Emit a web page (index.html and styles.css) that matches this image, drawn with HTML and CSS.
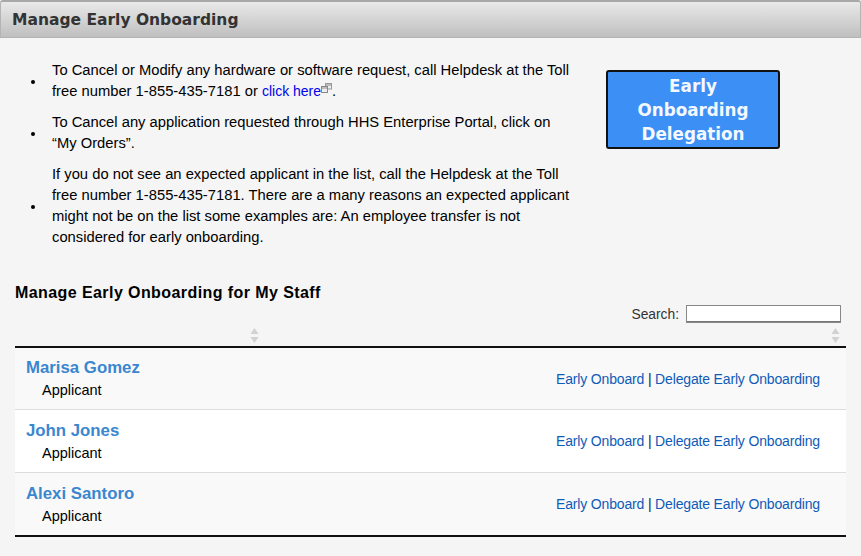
FILE: index.html
```html
<!DOCTYPE html>
<html lang="en">
<head>
<meta charset="utf-8">
<title>Manage Early Onboarding</title>
<link rel="stylesheet" href="styles.css">
</head>
<body>
<header class="titlebar"><h1>Manage Early Onboarding</h1></header>
<section class="intro">
  <ul class="notes">
    <li>To Cancel or Modify any hardware or software request, call Helpdesk at the Toll free number 1-855-435-7181 or <a class="plain" href="#">click here<svg class="ext" width="11" height="11" viewBox="0 0 11 11"><rect x="4.500" y="0.500" width="6" height="5.500" fill="#eee" stroke="#999"/><rect x="0.500" y="3.500" width="6" height="6" fill="#eee" stroke="#888"/><path d="M0.500 5h6M4.500 2h6" stroke="#888"/></svg></a>.</li>
    <li>To Cancel any application requested through HHS Enterprise Portal, click on “My Orders”.</li>
    <li>If you do not see an expected applicant in the list, call the Helpdesk at the Toll free number 1-855-435-7181. There are a many reasons an expected applicant might not be on the list some examples are: An employee transfer is not considered for early onboarding.</li>
  </ul>
  <a class="delegate" href="#">Early Onboarding Delegation</a>
</section>
<section class="staff">
  <h2>Manage Early Onboarding for My Staff</h2>
  <div class="search"><label for="q">Search:</label><input id="q" type="text"></div>
  <div class="sorts">
    <span class="sort-cell first"><svg class="sort" width="9" height="15" viewBox="0 0 10 16" preserveAspectRatio="none"><path d="M5 0l4.500 6.500h-9z M5 16l4.500-6.500h-9z" fill="#d2d2d2"/></svg></span>
    <span class="sort-cell"><svg class="sort" width="9" height="15" viewBox="0 0 10 16" preserveAspectRatio="none"><path d="M5 0l4.500 6.500h-9z M5 16l4.500-6.500h-9z" fill="#d2d2d2"/></svg></span>
  </div>
  <div class="rows">
    <div class="row odd">
      <div class="who"><a class="name" href="#">Marisa Gomez</a><span class="role">Applicant</span></div>
      <div class="actions"><a href="#">Early Onboard</a> | <a href="#">Delegate Early Onboarding</a></div>
    </div>
    <div class="row">
      <div class="who"><a class="name" href="#">John Jones</a><span class="role">Applicant</span></div>
      <div class="actions"><a href="#">Early Onboard</a> | <a href="#">Delegate Early Onboarding</a></div>
    </div>
    <div class="row odd">
      <div class="who"><a class="name" href="#">Alexi Santoro</a><span class="role">Applicant</span></div>
      <div class="actions"><a href="#">Early Onboard</a> | <a href="#">Delegate Early Onboarding</a></div>
    </div>
  </div>
</section>
</body>
</html>
```
FILE: styles.css
```css
* { box-sizing: border-box; }
html, body { height: 100%; }
body {
  margin: 0;
  background: #f5f5f5;
  font-family: "Liberation Sans", Arial, sans-serif;
  font-size: 14.500px;
  color: #000;
  overflow: hidden;
}
a { text-decoration: none; }
.titlebar {
  height: 38px;
  background: linear-gradient(#e9e9e9, #bfbfbf);
  border: 1px solid #b4b4b4;
  border-top: 2px solid #a8a8a8;
  border-radius: 3px 3px 0 0;
  display: flex;
  align-items: center;
  padding-left: 11px;
}
h1 {
  margin: 0;
  font-family: "DejaVu Sans", Verdana, sans-serif;
  font-size: 15.500px;
  font-weight: bold;
  color: #333;
}
.intro {
  display: flex;
  align-items: flex-start;
  padding: 22px 81px 0 0;
  height: 245px;
}
.notes {
  list-style: none;
  margin: 0;
  padding: 0 0 0 30px;
  width: 575px;
  flex: none;
  font-size: 14.750px;
  line-height: 21px;
  display: flex;
  flex-direction: column;
  gap: 10px;
}
.notes li {
  position: relative;
  padding-left: 22px;
  width: 100%;
}
.notes li::before {
  content: "";
  position: absolute;
  left: 1px;
  top: 50%;
  width: 4px;
  height: 4px;
  margin-top: -1px;
  border-radius: 50%;
  background: #000;
}
.plain { color: #0000ee; font-size: 14px; }
.ext { margin-left: 0; vertical-align: 2px; }
.delegate {
  margin: 10px 0 0 auto;
  width: 174px;
  height: 79px;
  padding: 2px 24px 0;
  background: #3b8ff5;
  border: 2px solid #111;
  border-radius: 3px;
  color: #f4f8ff;
  font-family: "DejaVu Sans", Verdana, sans-serif;
  font-weight: bold;
  font-size: 16.800px;
  line-height: 24px;
  text-align: center;
}
.staff { padding: 0 15px; }
h2 {
  margin: 0;
  font-size: 16px;
  line-height: 20px;
  font-weight: bold;
  letter-spacing: 0.420px;
}
.search {
  display: flex;
  justify-content: flex-end;
  align-items: center;
  gap: 7px;
  height: 18px;
  margin: 2px 5px 0 0;
  font-size: 13.800px;
  color: #333;
}
.search input {
  width: 155px;
  height: 18px;
  padding: 0;
  background: #fff;
  border: 1px solid #777;
  border-bottom-width: 2px;
  outline: 1px solid #888;
  outline-offset: -1px;
}
.sorts {
  display: flex;
  height: 23px;
  padding-top: 5px;
  justify-content: space-between;
}
.sort-cell.first { padding-left: 235px; }
.sort-cell { display: block; padding-right: 6px; }
.sort { display: block; }
.rows {
  border-top: 2px solid #111;
  border-bottom: 2px solid #111;
}
.row {
  height: 63px;
  background: #fff;
  border-top: 1px solid #ddd;
  display: flex;
  justify-content: space-between;
  align-items: center;
  padding: 0 26px 0 11px;
}
.row:first-child { border-top: 0; height: 61px; }
.row.odd { background: #f9f9f9; }
.who { display: flex; flex-direction: column; padding-top: 2px; }
.row:first-child .who { padding-top: 0; }
.name {
  color: #3a87cf;
  font-size: 16.800px;
  font-weight: bold;
  line-height: 22px;
}
.role {
  padding-left: 16px;
  line-height: 22px;
}
.actions { color: #222; font-size: 14px; letter-spacing: -0.160px; }
.actions a { color: #0f5bb8; }
```
